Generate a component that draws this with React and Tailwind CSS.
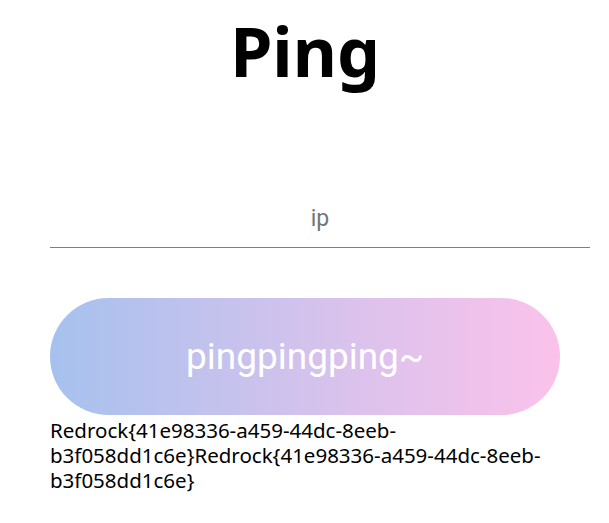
export default function App() {
  return (
    <div className="min-h-screen bg-white text-black" style={{ fontFamily: '"Noto Sans", "Open Sans", sans-serif' }}>
      <div className="ml-[50px] w-[540px]">
        <h1 className="pt-[6px] pr-[30px] text-center text-[68px] font-bold leading-[90px]">Ping</h1>
        <div className="mt-[107px] border-b border-[#808080] pb-[12px]">
          <input
            placeholder="ip"
            className="w-full text-center text-[23px] leading-[32px] outline-none placeholder:text-[#757575]"
            style={{ fontFamily: 'Roboto, "Noto Sans", sans-serif' }}
          />
        </div>
        <button
          className="mt-[50px] flex h-[117px] w-[510px] items-center justify-center rounded-full bg-gradient-to-r from-[#a6c1ee] to-[#fbc2eb] text-[37px] text-white"
          style={{ fontFamily: 'Roboto, "Noto Sans", sans-serif' }}
        >
          pingpingping~
        </button>
        <p className="w-[510px] pt-[3px] text-[20.5px] leading-[25px] break-words">
          Redrock{'{'}41e98336-a459-44dc-8eeb-b3f058dd1c6e{'}'}Redrock{'{'}41e98336-a459-44dc-8eeb-b3f058dd1c6e{'}'}
        </p>
      </div>
    </div>
  );
}
